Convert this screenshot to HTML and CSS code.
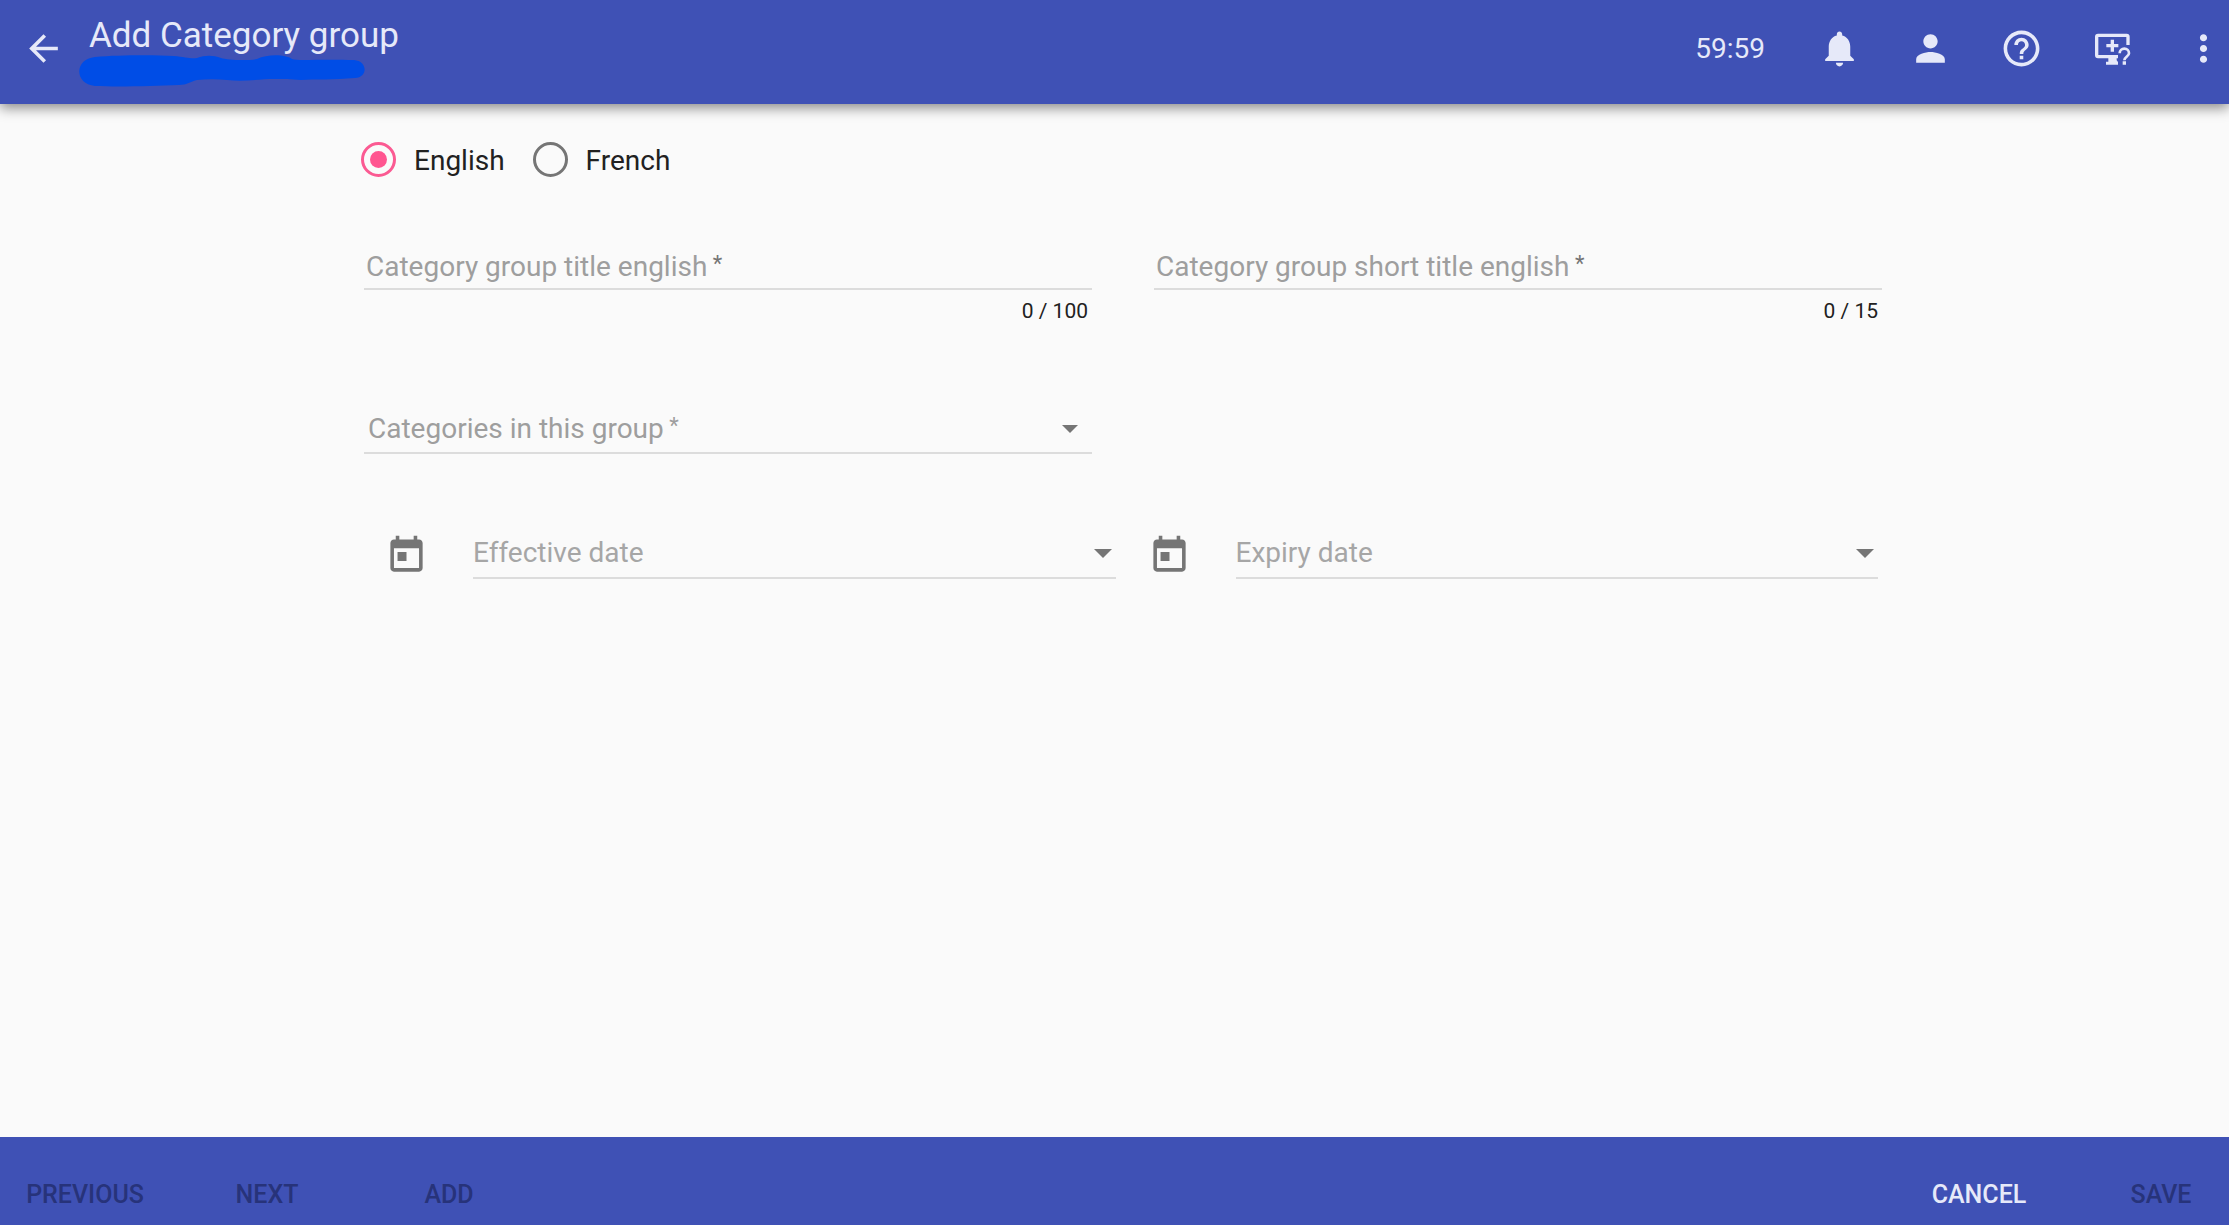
FILE: index.html
```html
<!DOCTYPE html>
<html lang="en">
<head>
  <meta charset="utf-8">
  <meta name="viewport" content="width=device-width, initial-scale=1">
  <title>Add Category group</title>
  <link rel="stylesheet" href="styles.css">
</head>
<body>
  <header class="topbar">
    <button class="icon-button" type="button" aria-label="Back">
      <svg class="icon" viewBox="0 0 24 24"><path d="M20 11H7.830l5.590-5.590L12 4l-8 8 8 8 1.410-1.410L7.830 13H20v-2z"/></svg>
    </button>
    <div class="brand">
      <h1 class="title">Add Category group</h1>
      <svg class="marker" viewBox="0 0 286 32" aria-hidden="true"><path d="M16 2C40 0 75 0 95 1C106 2 112 4 118 3C126 0 134 0 142 3C148 5 168 6 178 4C188-1 206-1 213 4C218 6 240 4 275 5C289 6 289 23 276 23C255 25 236 24 222 25C210 24 206 24 196 24C180 24 165 27 148 25C138 24 128 24 118 25C110 27 108 30 100 30C75 31 40 32 16 31C-5 29-5 4 16 2z"/></svg>
    </div>
    <div class="actions">
      <span class="timer">59:59</span>
      <button class="icon-button" type="button" aria-label="Notifications">
        <svg class="icon" viewBox="0 0 24 24"><path d="M12 22c1.100 0 2-.9 2-2h-4c0 1.100.89 2 2 2zm6-6v-5c0-3.070-1.640-5.640-4.500-6.320V4c0-.83-.67-1.500-1.500-1.500s-1.500.67-1.500 1.500v.68C7.630 5.360 6 7.920 6 11v5l-2 2v1h16v-1l-2-2z"/></svg>
      </button>
      <button class="icon-button" type="button" aria-label="Account">
        <svg class="icon" viewBox="0 0 24 24"><path d="M12 12c2.210 0 4-1.790 4-4s-1.790-4-4-4-4 1.790-4 4 1.790 4 4 4zm0 2c-2.670 0-8 1.340-8 4v2h16v-2c0-2.660-5.330-4-8-4z"/></svg>
      </button>
      <button class="icon-button" type="button" aria-label="Help">
        <svg class="icon" viewBox="0 0 24 24"><path d="M11 18h2v-2h-2v2zm1-16C6.480 2 2 6.480 2 12s4.480 10 10 10 10-4.480 10-10S17.520 2 12 2zm0 18c-4.410 0-8-3.590-8-8s3.590-8 8-8 8 3.590 8 8-3.590 8-8 8zm0-14c-2.210 0-4 1.790-4 4h2c0-1.100.9-2 2-2s2 .9 2 2c0 2-3 1.750-3 5h2c0-2.250 3-2.500 3-5 0-2.210-1.790-4-4-4z"/></svg>
      </button>
      <button class="icon-button" type="button" aria-label="Remote support">
        <svg class="icon" viewBox="0 0 129 129"><path class="stroke" d="M111 54V29q0-4-4-4H21q-4 0-4 4v56q0 4 4 4h60M64 38v36M46 56h36"/><path d="M52 90h25v10l4 5v8H45v-9h7zM95 103h10v10H95z"/><path class="stroke thin" d="M86 79a14 14 0 0 1 28 0c0 9-14 10-14 21"/></svg>
      </button>
      <button class="icon-button" type="button" aria-label="More">
        <svg class="icon" viewBox="0 0 24 24"><path d="M12 8c1.100 0 2-.9 2-2s-.9-2-2-2-2 .9-2 2 .9 2 2 2zm0 2c-1.100 0-2 .9-2 2s.9 2 2 2 2-.9 2-2-.9-2-2-2zm0 6c-1.100 0-2 .9-2 2s.9 2 2 2 2-.9 2-2-.9-2-2-2z"/></svg>
      </button>
    </div>
  </header>

  <main class="content">
    <form id="group-form">
      <div class="languages" role="radiogroup" aria-label="Language">
        <label class="choice"><input class="radio" type="radio" name="language" checked>English</label>
        <label class="choice"><input class="radio" type="radio" name="language">French</label>
      </div>

      <div class="columns titles">
        <div>
          <div class="field">
            <label class="label" for="title">Category group title english<span class="required dark"> *</span></label>
            <input class="control" id="title" type="text" maxlength="100">
          </div>
          <div class="counter">0 / 100</div>
        </div>
        <div>
          <div class="field">
            <label class="label" for="short-title">Category group short title english<span class="required dark"> *</span></label>
            <input class="control" id="short-title" type="text" maxlength="15">
          </div>
          <div class="counter">0 / 15</div>
        </div>
      </div>

      <div class="columns categories">
        <div class="field select-field">
          <label class="label" for="categories">Categories in this group<span class="required"> *</span></label>
          <select class="control" id="categories"><option></option></select>
          <svg class="arrow" viewBox="0 0 16 8" aria-hidden="true"><path d="M0 0h16L8 8z"/></svg>
        </div>
      </div>

      <div class="dates">
        <div class="date">
          <svg class="icon calendar" viewBox="0 0 24 24" aria-hidden="true"><path d="M19 3h-1V1h-2v2H8V1H6v2H5c-1.110 0-1.990.9-1.990 2L3 19c0 1.100.89 2 2 2h14c1.100 0 2-.9 2-2V5c0-1.100-.9-2-2-2zm0 16H5V8h14v11zM7 10h5v5H7z"/></svg>
          <div class="field date-field">
            <label class="label" for="effective">Effective date</label>
            <input class="control" id="effective" type="text">
            <button class="open" type="button" aria-label="Choose effective date"><svg class="arrow" viewBox="0 0 16 8"><path d="M0 0h16L8 8z"/></svg></button>
          </div>
        </div>
        <div class="date">
          <svg class="icon calendar" viewBox="0 0 24 24" aria-hidden="true"><path d="M19 3h-1V1h-2v2H8V1H6v2H5c-1.110 0-1.990.9-1.990 2L3 19c0 1.100.89 2 2 2h14c1.100 0 2-.9 2-2V5c0-1.100-.9-2-2-2zm0 16H5V8h14v11zM7 10h5v5H7z"/></svg>
          <div class="field date-field">
            <label class="label" for="expiry">Expiry date</label>
            <input class="control" id="expiry" type="text">
            <button class="open" type="button" aria-label="Choose expiry date"><svg class="arrow" viewBox="0 0 16 8"><path d="M0 0h16L8 8z"/></svg></button>
          </div>
        </div>
      </div>
    </form>
  </main>

  <footer class="bottombar">
    <button class="action" type="button" disabled>PREVIOUS</button>
    <button class="action" type="button" disabled>NEXT</button>
    <button class="action" type="button" disabled>ADD</button>
    <button class="action cancel" type="button">CANCEL</button>
    <button class="action" type="submit" form="group-form" disabled>SAVE</button>
  </footer>
</body>
</html>
```
FILE: styles.css
```css
* {
  box-sizing: border-box;
}

body {
  display: flex;
  flex-direction: column;
  min-height: 100vh;
  margin: 0;
  background: #fafafa;
  color: #212121;
  font: 28px/38px Roboto, sans-serif;
}

button,
input,
select {
  margin: 0;
  padding: 0;
  border: 0;
  background: none;
  color: inherit;
  font: inherit;
}

svg {
  display: block;
  fill: currentColor;
}

/* Top bar */
.topbar {
  display: flex;
  align-items: center;
  padding: 0 4px 0 22px;
  min-height: 104px;
  background: #3f51b5;
  color: #e6e9f9;
  box-shadow: 0 4px 12px rgba(0, 0, 0, 0.45);
}

.icon-button {
  margin-bottom: 8px;
}

.icon {
  width: 43px;
  height: 43px;
}

.stroke {
  fill: none;
  stroke: currentColor;
  stroke-width: 10;
}

.thin {
  stroke-width: 8;
}

.brand {
  align-self: flex-start;
  margin-left: 14px;
  padding-top: 17px;
}

.title {
  margin: 0;
  padding-left: 10px;
  font-size: 35px;
  font-weight: 400;
  line-height: 38px;
}

.marker {
  width: 286px;
  height: 32px;
  fill: #004de6;
}

.actions {
  display: flex;
  align-items: center;
  gap: 48px;
  margin-left: auto;
}

.timer {
  margin: 0 5px 6px 0;
}

/* Form */
.content {
  flex: 1;
  padding: 38px 347px 48px 364px;
}

.languages {
  display: flex;
  gap: 28px;
  margin: 0 0 68px -3px;
}

.choice {
  display: flex;
  align-items: flex-start;
  gap: 18px;
}

.radio {
  display: grid;
  place-items: center;
  width: 35px;
  height: 35px;
  border: 3px solid #757575;
  border-radius: 50%;
  appearance: none;
}

.radio:checked {
  border-color: #fb5a92;
}

.radio:checked::before {
  content: "";
  width: 17px;
  height: 17px;
  border-radius: 50%;
  background: #ff5590;
}

.columns {
  display: grid;
  grid-template-columns: 1fr 1fr;
  gap: 62px;
}

.field {
  display: grid;
  align-items: center;
  padding: 0 2px 2px;
  border-bottom: 2px solid #dcdcdc;
}

.field > * {
  grid-area: 1 / 1;
}

.label {
  color: #9e9e9e;
  pointer-events: none;
}

.required {
  font-size: 22px;
  line-height: 22px;
  vertical-align: 5px;
}

.dark {
  color: #757575;
}

.control {
  width: 100%;
  height: 38px;
  outline: 0;
  appearance: none;
}

.counter {
  padding: 7px 4px 0 0;
  font-size: 21px;
  line-height: 28px;
  text-align: right;
}

.categories {
  margin-top: 85px;
}

.select-field {
  padding: 0 14px 4px 4px;
}

.arrow {
  justify-self: end;
  width: 16px;
  height: 8px;
  color: #757575;
  pointer-events: none;
}

.dates {
  display: grid;
  grid-template-columns: 1fr 1fr;
  gap: 32px;
  margin-top: 80px;
  padding: 0 4px 0 21px;
}

.date {
  display: flex;
  gap: 45px;
}

.calendar {
  flex: none;
  color: #757575;
}

.date-field {
  flex: 1;
  padding: 0 4px 5px 0;
}

.date-field .label {
  color: #a6a6a6;
}

.open {
  justify-self: end;
}

.open .arrow {
  width: 18px;
  height: 9px;
}

/* Bottom bar */
.bottombar {
  display: flex;
  gap: 48px;
  padding: 27px 1px 0 18px;
  background: #3f51b5;
  color: #e6e9f9;
}

.action {
  width: 134px;
  height: 61px;
  font-size: 25px;
  font-weight: 500;
  white-space: nowrap;
}

.action:disabled {
  color: #27337a;
}

.cancel {
  margin-left: auto;
}
```
